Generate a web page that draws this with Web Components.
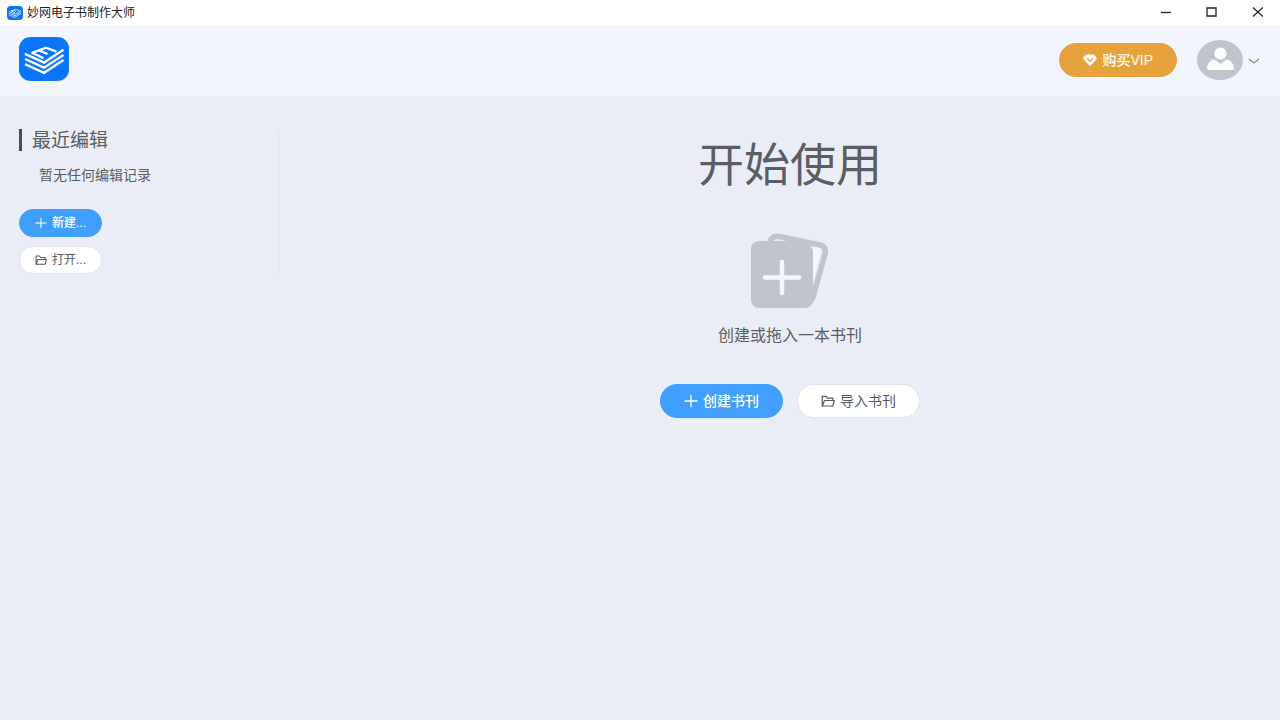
<!DOCTYPE html>
<html lang="zh-CN">
<head>
<meta charset="utf-8">
<title>妙网电子书制作大师</title>
<style>
html, body { margin: 0; height: 100%; }
body { font-family: "Liberation Sans", "Noto Sans CJK SC", sans-serif; color: #5b5d62; background: #eaedf6; }
</style>
</head>
<body>
<book-app></book-app>
<script>
function define(name, html, connected) {
  const template = document.createElement('template');
  template.innerHTML = html;
  customElements.define(name, class extends HTMLElement {
    constructor() {
      super();
      this.attachShadow({ mode: 'open' }).append(template.content.cloneNode(true));
    }
    connectedCallback() {
      if (connected) connected(this);
    }
  });
}

const icons = {
  plus: '<svg viewBox="0 0 14 14" fill="none" stroke="currentColor" stroke-width="1.3" stroke-linecap="round"><path d="M7 1.5v11M1 7h12"/></svg>',
  folder: '<svg viewBox="0 0 14 14" fill="none" stroke="currentColor" stroke-width="1.2" stroke-linejoin="round"><path d="M1.2 12V2.3h4l1.3 1.8h5.3v2.500M1.2 12l2.3-5.500h9.8L11.8 12z"/></svg>',
  gem: '<svg viewBox="0 0 14 14"><path d="M3.4 1.5h7.2q.5 0 .8.4l2.3 3q.4.6-.1 1.1l-5.9 6.5q-.7.7-1.4 0L.4 6Q-.1 5.5.3 4.9l2.3-3q.3-.4.8-.4z" fill="currentColor"/><path d="M4.3 5.7 7 8.2l2.7-2.5" fill="none" stroke="#e6a23c" stroke-width="1.3" stroke-linecap="round" stroke-linejoin="round"/></svg>'
};

define('app-logo', `
<style>
:host { display: block; flex: none; }
svg { display: block; width: 100%; height: 100%; }
</style>
<svg viewBox="0 0 50 43" preserveAspectRatio="none" aria-hidden="true">
<rect width="50" height="43" rx="12" ry="11" fill="#0a75fa"/>
<g fill="none" stroke="#fff" stroke-width="2.3">
<path d="M6 17.500 25 26 44.500 13.500M6 22.500 25 31 44.500 18.500M6 27.500 25 36 44.500 23.500" stroke-linejoin="miter" transform="translate(0 -1)"/>
<path d="M12.500 15.700 27 10.500 37.500 14.200M20 13l8.500 3.600M12.500 15.200 24.500 20.800"/>
</g>
</svg>`);

define('window-bar', `
<style>
:host { display: flex; height: 26px; align-items: center; background: #fff; color: #222; padding-left: 7px; box-sizing: border-box; }
app-logo { width: 16px; height: 14px; margin-right: 4px; }
h1 { font-size: 12px; line-height: 16px; font-weight: 400; margin: 0; flex: 1; }
button { width: 46px; height: 26px; padding: 0 0 2px; border: 0; background: none; color: #222; display: grid; place-items: center; }
svg { width: 12px; height: 12px; fill: none; stroke: currentColor; stroke-width: 1.3; }
</style>
<app-logo></app-logo>
<h1>妙网电子书制作大师</h1>
<button aria-label="最小化"><svg viewBox="0 0 12 12"><path d="M2 6.500h10"/></svg></button>
<button aria-label="最大化"><svg viewBox="0 0 12 12"><path d="M2 2h9v8h-9z"/></svg></button>
<button aria-label="关闭"><svg viewBox="0 0 12 12"><path d="M2 1.500l10 9M12 1.500l-10 9"/></svg></button>`);

define('action-button', `
<style>
:host { display: block; }
button { font: inherit; font-size: 14px; line-height: 20px; height: 34px; padding: 0 23px; border: 1px solid #e1e4ea; border-radius: 17px; background: #fff; color: #55575c; display: flex; align-items: center; justify-content: center; gap: 5px; white-space: nowrap; }
svg { display: block; width: 14px; height: 14px; }
:host([kind="primary"]) button { background: #409eff; border-color: #409eff; color: #fff; font-weight: 500; }
:host([kind="vip"]) button { background: #e6a23c; border-color: #e6a23c; color: #fff; font-weight: 500; }
:host([size="small"]) button { font-size: 12px; height: 28px; border-radius: 14px; padding: 0 15px; }
:host([size="small"]) svg { width: 12px; height: 12px; }
</style>
<button type="button"><span id="icon"></span><span><slot></slot></span></button>`, host => {
  host.shadowRoot.getElementById('icon').innerHTML = icons[host.getAttribute('icon')];
});

define('user-menu', `
<style>
:host { display: block; }
button { display: flex; align-items: center; gap: 5px; border: 0; padding: 0; background: none; color: #85888e; }
.face { width: 46px; height: 40px; }
.arrow { width: 12px; height: 8px; }
</style>
<button type="button" aria-label="用户菜单">
<svg class="face" viewBox="0 0 46 40"><ellipse cx="23" cy="20" rx="23" ry="20" fill="#c0c4cc"/><ellipse cx="23.500" cy="13.500" rx="6" ry="6" fill="#fff"/><path d="M17.500 19.500 23.500 24l6-4.500q7 1.500 7.500 8.500 0 2-2 2h-23q-2 0-2-2 .5-7 7.500-8.500z" fill="#fff"/></svg>
<svg class="arrow" viewBox="0 0 12 8" fill="none" stroke="currentColor" stroke-width="1.2"><path d="M1 3l5 4 5-4"/></svg>
</button>`);

define('app-header', `
<style>
:host { display: flex; align-items: center; height: 70px; box-sizing: border-box; padding: 0 20px 2px 19px; background: #f2f5fe; }
app-logo { width: 50px; height: 44px; margin: 0 auto 2px 0; }
user-menu { margin-left: 20px; }
</style>
<app-logo></app-logo>
<action-button kind="vip" icon="gem">购买VIP</action-button>
<user-menu></user-menu>`);

define('recent-panel', `
<style>
:host { display: block; width: 300px; box-sizing: border-box; flex: none; padding: 33px 6px 0 0; background: linear-gradient(#eceef2, #eceef2) 293px 0 / 2px 100% no-repeat; }
section { margin-right: 15px; padding: 0 0 1px 19px; border-right: 1px solid #dfe2ea; box-sizing: border-box; }
h2 { margin: 0; font-size: 19px; line-height: 24px; height: 22px; font-weight: 400; border-left: 3px solid #4b4e54; padding-left: 10px; }
p { margin: 14px 0 24px 20px; font-size: 14px; line-height: 20px; }
nav { display: flex; flex-direction: column; align-items: flex-start; gap: 9px; }
</style>
<section>
<h2>最近编辑</h2>
<p>暂无任何编辑记录</p>
<nav aria-label="文件">
<action-button kind="primary" size="small" icon="plus">新建...</action-button>
<action-button size="small" icon="folder">打开...</action-button>
</nav>
</section>`);

define('start-panel', `
<style>
:host { display: flex; flex: 1; flex-direction: column; align-items: center; padding-top: 37px; box-sizing: border-box; }
h2 { margin: 0; font-size: 46px; line-height: 64px; font-weight: 400; }
svg { display: block; width: 78px; height: 76px; margin-top: 36px; }
p { margin: 17px 0 38px; font-size: 16px; line-height: 20px; }
div { display: flex; gap: 14px; }
</style>
<h2>开始使用</h2>
<svg viewBox="0 0 78 76" aria-hidden="true">
<path d="M19 9Q21 2 28 3.500L69 12Q76 14 74 21L62 64Q60 70 54 71" fill="none" stroke="#c0c4cc" stroke-width="5.5"/>
<rect y="8" width="62" height="67" rx="8" fill="#c0c4cc"/>
<path d="M59 13q3 2 3 6v32l7-32q1-4-3-4.500z" fill="#f4f6fb"/>
<path d="M31 29v31M14 44.500h34" stroke="#f4f6fb" stroke-width="4.5" stroke-linecap="round"/>
</svg>
<p>创建或拖入一本书刊</p>
<div>
<action-button kind="primary" icon="plus">创建书刊</action-button>
<action-button icon="folder">导入书刊</action-button>
</div>`);

define('book-app', `
<style>
:host { display: flex; flex-direction: column; min-height: 100vh; }
main { display: flex; flex: 1; }
</style>
<window-bar></window-bar>
<app-header></app-header>
<main><recent-panel></recent-panel><start-panel></start-panel></main>`);
</script>
</body>
</html>
